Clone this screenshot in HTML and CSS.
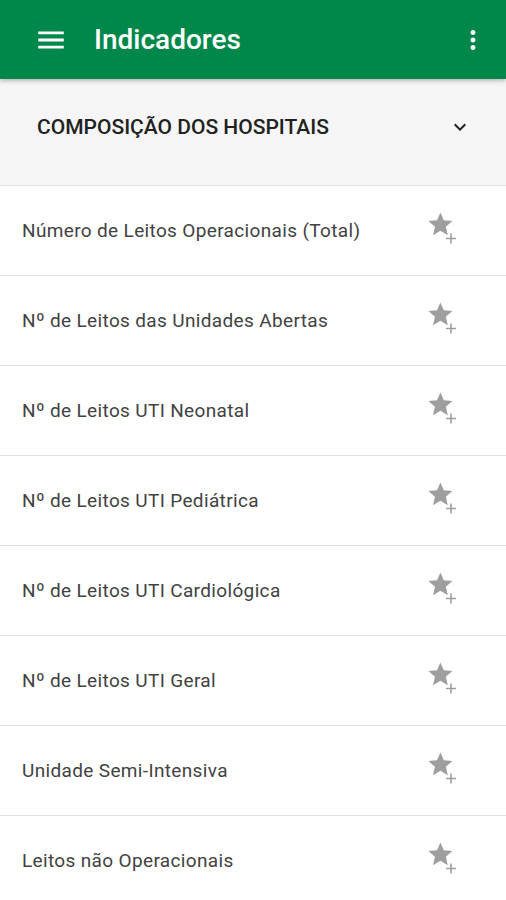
FILE: index.html
```html
<!DOCTYPE html>
<html lang="pt">
<head>
    <meta charset="UTF-8">
    <meta name="viewport" content="width=device-width, initial-scale=1.0">
    <title>Indicadores</title>
    <link rel="stylesheet" href="styles.css">
</head>
<body>
    <header class="toolbar">
        <svg class="menu-icon" viewBox="0 0 24 24" width="34" height="34">
            <path d="M3 18h18v-2H3v2zm0-5h18v-2H3v2zm0-7v2h18V6H3z" fill="#fff"/>
        </svg>
        <h1 class="title">Indicadores</h1>
        <svg class="more-icon" viewBox="0 0 24 24" width="30" height="30">
            <path d="M12 8c1.1 0 2-.9 2-2s-.9-2-2-2-2 .9-2 2 .9 2 2 2zm0 2c-1.1 0-2 .9-2 2s.9 2 2 2 2-.9 2-2-.9-2-2-2zm0 6c-1.1 0-2 .9-2 2s.9 2 2 2 2-.9 2-2-.9-2-2-2z" fill="#fff"/>
        </svg>
    </header>

    <div class="section">
        <span class="section-title">COMPOSIÇÃO DOS HOSPITAIS</span>
        <svg class="chevron" viewBox="0 0 24 24" width="24" height="24">
            <path d="M7.41 8.59L12 13.17l4.59-4.58L18 10l-6 6-6-6 1.41-1.41z" fill="#212121"/>
        </svg>
    </div>

    <ul class="list">
        <li class="item"><span>Número de Leitos Operacionais (Total)</span><svg class="fav" viewBox="0 0 34 42" width="34" height="42"><path transform="scale(1.2)" d="M12 17.27L18.18 21l-1.64-7.03L22 9.24l-7.19-.61L12 2 9.19 8.63 2 9.24l5.46 4.73L5.82 21z" fill="#9e9e9e"/><path d="M20 28.5h10M25 23.5v10" stroke="#9e9e9e" stroke-width="1.6"/></svg></li>
        <li class="item"><span>Nº de Leitos das Unidades Abertas</span><svg class="fav" viewBox="0 0 34 42" width="34" height="42"><path transform="scale(1.2)" d="M12 17.27L18.18 21l-1.64-7.03L22 9.24l-7.19-.61L12 2 9.19 8.63 2 9.24l5.46 4.73L5.82 21z" fill="#9e9e9e"/><path d="M20 28.5h10M25 23.5v10" stroke="#9e9e9e" stroke-width="1.6"/></svg></li>
        <li class="item"><span>Nº de Leitos UTI Neonatal</span><svg class="fav" viewBox="0 0 34 42" width="34" height="42"><path transform="scale(1.2)" d="M12 17.27L18.18 21l-1.64-7.03L22 9.24l-7.19-.61L12 2 9.19 8.63 2 9.24l5.46 4.73L5.82 21z" fill="#9e9e9e"/><path d="M20 28.5h10M25 23.5v10" stroke="#9e9e9e" stroke-width="1.6"/></svg></li>
        <li class="item"><span>Nº de Leitos UTI Pediátrica</span><svg class="fav" viewBox="0 0 34 42" width="34" height="42"><path transform="scale(1.2)" d="M12 17.27L18.18 21l-1.64-7.03L22 9.24l-7.19-.61L12 2 9.19 8.63 2 9.24l5.46 4.73L5.82 21z" fill="#9e9e9e"/><path d="M20 28.5h10M25 23.5v10" stroke="#9e9e9e" stroke-width="1.6"/></svg></li>
        <li class="item"><span>Nº de Leitos UTI Cardiológica</span><svg class="fav" viewBox="0 0 34 42" width="34" height="42"><path transform="scale(1.2)" d="M12 17.27L18.18 21l-1.64-7.03L22 9.24l-7.19-.61L12 2 9.19 8.63 2 9.24l5.46 4.73L5.82 21z" fill="#9e9e9e"/><path d="M20 28.5h10M25 23.5v10" stroke="#9e9e9e" stroke-width="1.6"/></svg></li>
        <li class="item"><span>Nº de Leitos UTI Geral</span><svg class="fav" viewBox="0 0 34 42" width="34" height="42"><path transform="scale(1.2)" d="M12 17.27L18.18 21l-1.64-7.03L22 9.24l-7.19-.61L12 2 9.19 8.63 2 9.24l5.46 4.73L5.82 21z" fill="#9e9e9e"/><path d="M20 28.5h10M25 23.5v10" stroke="#9e9e9e" stroke-width="1.6"/></svg></li>
        <li class="item"><span>Unidade Semi-Intensiva</span><svg class="fav" viewBox="0 0 34 42" width="34" height="42"><path transform="scale(1.2)" d="M12 17.27L18.18 21l-1.64-7.03L22 9.24l-7.19-.61L12 2 9.19 8.63 2 9.24l5.46 4.73L5.82 21z" fill="#9e9e9e"/><path d="M20 28.5h10M25 23.5v10" stroke="#9e9e9e" stroke-width="1.6"/></svg></li>
        <li class="item"><span>Leitos não Operacionais</span><svg class="fav" viewBox="0 0 34 42" width="34" height="42"><path transform="scale(1.2)" d="M12 17.27L18.18 21l-1.64-7.03L22 9.24l-7.19-.61L12 2 9.19 8.63 2 9.24l5.46 4.73L5.82 21z" fill="#9e9e9e"/><path d="M20 28.5h10M25 23.5v10" stroke="#9e9e9e" stroke-width="1.6"/></svg></li>
    </ul>
</body>
</html>
```

FILE: styles.css
```css
body {
    margin: 0;
    font-family: Roboto, "Noto Sans", Arial, sans-serif;
    background-color: #ffffff;
}
.toolbar {
    position: relative;
    z-index: 1;
    display: flex;
    align-items: center;
    height: 79px;
    padding: 0 18px 0 34px;
    background-color: #00884b;
    box-shadow: 0 2px 4px rgba(0, 0, 0, 0.25);
}
.menu-icon {
    flex: none;
}
.title {
    flex: 1;
    margin: 0 0 0 26px;
    color: #ffffff;
    font-size: 28px;
    font-weight: 500;
}
.more-icon {
    flex: none;
}
.section {
    display: flex;
    align-items: center;
    justify-content: space-between;
    height: 96px;
    padding: 0 34px 10px 37px;
    background-color: #f5f5f5;
    border-bottom: 1px solid #e0e0e0;
}
.section-title {
    color: #212121;
    font-size: 21px;
    font-weight: 500;
}
.chevron {
    flex: none;
}
.list {
    margin: 0;
    padding: 0;
    list-style: none;
}
.item {
    display: flex;
    align-items: center;
    justify-content: space-between;
    height: 89px;
    padding: 0 46px 0 22px;
    border-bottom: 1px solid #e0e0e0;
    color: #424242;
    font-size: 19px;
    letter-spacing: 0.35px;
}
.fav {
    flex: none;
}
```
